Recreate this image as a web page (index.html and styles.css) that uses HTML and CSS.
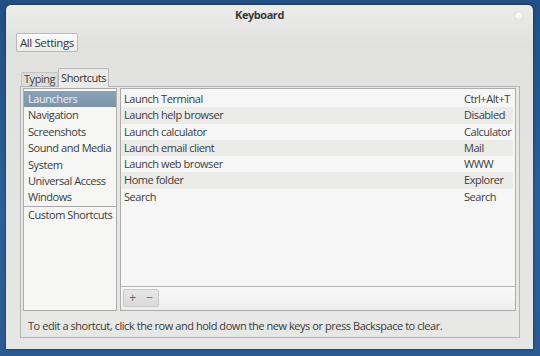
FILE: index.html
```html
<!DOCTYPE html>
<html>
<head>
    <title>Keyboard</title>
    <link rel="stylesheet" href="styles.css">
</head>
<body>
    <div class="window">
        <div class="titlebar">
            <span class="title">Keyboard</span>
            <span class="close-dot"></span>
        </div>

        <div class="toolbar">
            <button class="btn">All Settings</button>
        </div>

        <div class="notebook">
            <div class="tabs">
                <div class="tab">Typing</div>
                <div class="tab active">Shortcuts</div>
            </div>

            <div class="page">
                <div class="panes">
                    <!-- Categories -->
                    <div class="categories">
                        <div class="cat selected">Launchers</div>
                        <div class="cat">Navigation</div>
                        <div class="cat">Screenshots</div>
                        <div class="cat">Sound and Media</div>
                        <div class="cat">System</div>
                        <div class="cat">Universal Access</div>
                        <div class="cat">Windows</div>
                        <div class="cat custom">Custom Shortcuts</div>
                    </div>

                    <!-- Shortcuts -->
                    <div class="shortcuts">
                        <div class="rows">
                            <div class="row"><span>Launch Terminal</span><span class="accel">Ctrl+Alt+T</span></div>
                            <div class="row odd"><span>Launch help browser</span><span class="accel">Disabled</span></div>
                            <div class="row"><span>Launch calculator</span><span class="accel">Calculator</span></div>
                            <div class="row odd"><span>Launch email client</span><span class="accel">Mail</span></div>
                            <div class="row"><span>Launch web browser</span><span class="accel">WWW</span></div>
                            <div class="row odd"><span>Home folder</span><span class="accel">Explorer</span></div>
                            <div class="row"><span>Search</span><span class="accel">Search</span></div>
                        </div>
                        <div class="list-toolbar">
                            <div class="btn-group">
                                <span class="tb-btn">+</span>
                                <span class="tb-btn">&minus;</span>
                            </div>
                        </div>
                    </div>
                </div>

                <p class="hint">To edit a shortcut, click the row and hold down the new keys or press Backspace to clear.</p>
            </div>
        </div>
    </div>
</body>
</html>
```

FILE: styles.css
```css
html, body { margin: 0; padding: 0; }
body { width: 540px; height: 356px; overflow: hidden; background: linear-gradient(180deg, #224f86 0%, #2c5f99 60%, #2b5a92 100%); font-family: "Open Sans", sans-serif; font-size: 11px; letter-spacing: -0.45px; color: #3c3c3c; }

.window { margin: 5px 7px 0 6px; height: 344px; background: linear-gradient(180deg, #ececeb 0%, #e1e1e0 40px, #e6e6e5 100%); border-radius: 5px 5px 0 0; box-shadow: 0 0 3px rgba(0,0,0,0.5); display: flex; flex-direction: column; overflow: hidden; }

.titlebar { height: 19px; position: relative; display: flex; align-items: center; justify-content: center; padding-right: 20px; }
.title { font-weight: bold; font-size: 11px; color: #3a3a3a; }
.close-dot { position: absolute; right: 10px; top: 7px; width: 8px; height: 8px; border-radius: 50%; background: radial-gradient(circle at 40% 40%, #ffffff, #e0e0e0); box-shadow: 0 0 1px rgba(0,0,0,0.3); }

.toolbar { padding: 9px 0 0 10px; height: 37px; box-sizing: border-box; }
.btn { font-family: inherit; font-size: 11.5px; letter-spacing: -0.4px; color: #333; height: 19px; padding: 0 3px; background: linear-gradient(180deg, #fbfbfb, #ececec); border: 1px solid #b9b9b9; border-radius: 2px; box-shadow: 0 1px 0 #fff inset; }

.notebook { margin: 6px 13px 0 14px; }
.tabs { display: flex; align-items: flex-end; height: 19px; padding-left: 1px; }
.tab { padding: 0 2px; height: 13px; line-height: 12px; border: 1px solid #c4c4c4; border-bottom: none; background: #dcdcdb; color: #444; border-radius: 2px 2px 0 0; }
.tab.active { height: 18px; line-height: 18px; background: #eaeae9; border-color: #b9b9b9; color: #333; position: relative; top: 1px; }

.page { height: 252px; border: 1px solid #b4b4b4; background: #e7e7e6; box-sizing: border-box; padding: 1px 3px 0 2px; display: flex; flex-direction: column; }

.panes { display: flex; gap: 3px; height: 223px; }

.categories { width: 94px; box-sizing: border-box; border: 1px solid #acacac; background: #f6f6f5; padding-top: 2px; }
.cat { height: 16.4px; line-height: 16px; padding-left: 4px; white-space: nowrap; }
.cat.selected { background: linear-gradient(180deg, #8ba1b6, #7c93aa); color: #eef2f6; }
.cat.custom { border-top: 1px solid #a8a8a8; }

.shortcuts { flex: 1; border: 1px solid #acacac; background: #f6f6f6; display: flex; flex-direction: column; box-sizing: border-box; }
.rows { flex: 1; padding-top: 2px; padding-right: 2px; border-bottom: 1px solid #b6b6b6; }
.row { height: 16.3px; line-height: 16px; display: flex; padding-left: 3px; }
.row span:first-child { flex: 1; }
.row.odd { background: #ebebea; }
.accel { width: 49px; }

.list-toolbar { height: 23px; background: linear-gradient(180deg, #fafafa, #ededed); padding: 2px 0 0 2px; box-sizing: border-box; }
.btn-group { display: inline-flex; height: 18px; border: 1px solid #c8c8c8; border-radius: 2px; background: linear-gradient(180deg, #e6e6e6, #dadada); box-sizing: border-box; }
.tb-btn { width: 17px; text-align: center; line-height: 16px; font-size: 12px; color: #666; }

.hint { margin: 7px 0 0 5px; font-size: 11px; color: #3a3a3a; white-space: nowrap; }
```
